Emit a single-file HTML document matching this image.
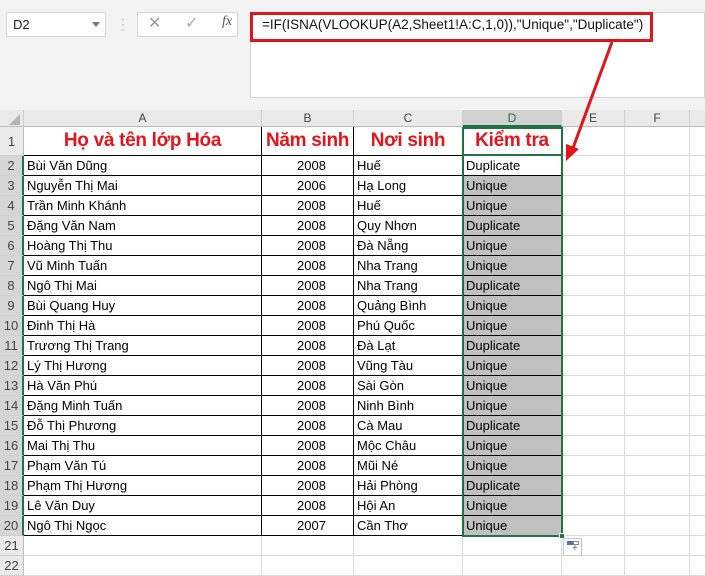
<!DOCTYPE html>
<html><head><meta charset="utf-8"><style>
*{margin:0;padding:0;box-sizing:border-box}
body{width:705px;height:565px;overflow:hidden;background:#fff;font-family:"Liberation Sans","DejaVu Sans",sans-serif;position:relative}
.a{position:absolute}
.top{left:0;top:0;width:705px;height:110px;background:#f3f3f3}
.colh{top:110px;height:17px;background:#eaeaea;border-right:1px solid #d0d0d0;border-bottom:1px solid #bdbdbd;font-size:12px;color:#444;text-align:center;line-height:17px}
.rowh{left:0;width:24px;background:#eaeaea;border-bottom:1px solid #d0d0d0;border-right:1px solid #bdbdbd;font-size:13px;color:#444;text-align:center}
.c{font-size:13px;color:#000;white-space:nowrap;overflow:hidden;border-bottom:1px solid #000;border-right:1px solid #000;padding-left:3px;line-height:19px}
.g{border-bottom:1px solid #dadada;border-right:1px solid #dadada}
.h{font-size:19px;font-weight:bold;color:#e3151b;text-align:center;line-height:28px;border-bottom:1px solid #000;border-right:1px solid #000;white-space:nowrap;letter-spacing:-0.3px}
</style></head><body>
<div class="a top"></div>
<div class="a" style="left:6px;top:12px;width:100px;height:25px;background:#fff;border:1px solid #d4d4d4;font-size:13px;line-height:23px;padding-left:6px;color:#222">D2</div>
<div class="a" style="left:92px;top:22px;border-left:4px solid transparent;border-right:4px solid transparent;border-top:5px solid #777"></div>
<div class="a" style="left:121px;top:17px;color:#aaa;font-size:12px;line-height:5px">·<br>·<br>·</div>
<div class="a" style="left:137px;top:12px;width:101px;height:25px;background:#fff;border:1px solid #d4d4d4"></div>
<div class="a" style="left:148px;top:13px;color:#999;font-size:16px">✕</div>
<div class="a" style="left:185px;top:13px;color:#aaa;font-size:16px">✓</div>
<div class="a" style="left:222px;top:14px;color:#555;font-size:14px;font-style:italic;font-family:'Liberation Serif',serif">fx</div>
<div class="a" style="left:250px;top:12px;width:455px;height:86px;background:#fff;border:1px solid #d4d4d4"></div>
<div class="a" style="left:250px;top:12px;width:403px;height:30px;border:3px solid #e0141b"></div>
<div class="a" style="left:262px;top:17px;font-size:13.5px;color:#111;white-space:nowrap">=IF(ISNA(VLOOKUP(A2,Sheet1!A:C,1,0)),"Unique","Duplicate")</div>

<div class="a colh" style="left:0;width:24px"><svg width="24" height="17"><path d="M20 4 L20 15 L9 15 Z" fill="#b5b5b5"/></svg></div>
<div class="a colh" style="left:24px;width:238px">A</div>
<div class="a colh" style="left:262px;width:92px">B</div>
<div class="a colh" style="left:354px;width:109px">C</div>
<div class="a colh" style="left:463px;width:99px;background:#d2d2d2;color:#217346;border-bottom:2px solid #217346">D</div>
<div class="a colh" style="left:562px;width:63px">E</div>
<div class="a colh" style="left:625px;width:65px">F</div>
<div class="a colh" style="left:690px;width:20px"></div>

<div id="g"></div>
<script>
var names=["Bùi Văn Dũng","Nguyễn Thị Mai","Trần Minh Khánh","Đặng Văn Nam","Hoàng Thị Thu","Vũ Minh Tuấn","Ngô Thị Mai","Bùi Quang Huy","Đinh Thị Hà","Trương Thị Trang","Lý Thị Hương","Hà Văn Phú","Đặng Minh Tuấn","Đỗ Thị Phương","Mai Thị Thu","Phạm Văn Tú","Phạm Thị Hương","Lê Văn Duy","Ngô Thị Ngọc"];
var yrs=["2008","2006","2008","2008","2008","2008","2008","2008","2008","2008","2008","2008","2008","2008","2008","2008","2008","2008","2007"];
var pl=["Huế","Hạ Long","Huế","Quy Nhơn","Đà Nẵng","Nha Trang","Nha Trang","Quảng Bình","Phú Quốc","Đà Lạt","Vũng Tàu","Sài Gòn","Ninh Bình","Cà Mau","Mộc Châu","Mũi Né","Hải Phòng","Hội An","Cần Thơ"];
var ck=["Duplicate","Unique","Unique","Duplicate","Unique","Unique","Duplicate","Unique","Unique","Duplicate","Unique","Unique","Unique","Duplicate","Unique","Unique","Duplicate","Unique","Unique"];
var h='';
function d(s,st,t){h+='<div class="a '+s+'" style="'+st+'">'+(t||'')+'</div>';}
d('rowh','top:127px;height:29px;line-height:29px','1');
d('h','left:24px;top:127px;width:238px;height:29px','Họ và tên lớp Hóa');
d('h','left:262px;top:127px;width:92px;height:29px','Năm sinh');
d('h','left:354px;top:127px;width:109px;height:29px','Nơi sinh');
d('h','left:463px;top:127px;width:99px;height:29px','Kiểm tra');
d('g','left:562px;top:127px;width:63px;height:29px');d('g','left:625px;top:127px;width:65px;height:29px');d('g','left:690px;top:127px;width:20px;height:29px');
for(var i=0;i<21;i++){var y=156+i*20,n=i+2;
 var sel=i<19;
 d('rowh','top:'+y+'px;height:20px;line-height:20px;'+(sel?'background:#d6d6d6;border-right:2px solid #217346;':''),n);
 if(i<19){
  d('c','left:24px;top:'+y+'px;width:238px;height:20px',names[i]);
  d('c','left:262px;top:'+y+'px;width:92px;height:20px;text-align:center;padding-left:8px',yrs[i]);
  d('c','left:354px;top:'+y+'px;width:109px;height:20px',pl[i]);
  d('c','left:463px;top:'+y+'px;width:99px;height:20px;'+(i>0?'background:#c0c0c0;':''),ck[i]);
 } else {
  d('g','left:24px;top:'+y+'px;width:238px;height:20px');d('g','left:262px;top:'+y+'px;width:92px;height:20px');
  d('g','left:354px;top:'+y+'px;width:109px;height:20px');d('g','left:463px;top:'+y+'px;width:99px;height:20px');
 }
 d('g','left:562px;top:'+y+'px;width:63px;height:20px');d('g','left:625px;top:'+y+'px;width:65px;height:20px');d('g','left:690px;top:'+y+'px;width:20px;height:20px');
}
document.getElementById('g').innerHTML=h;
</script>
<div class="a" style="left:462px;top:127px;width:101px;height:410px;border:2px solid #217346"></div>
<div class="a" style="left:462px;top:154px;width:101px;height:2px;background:#217346"></div>
<div class="a" style="left:559px;top:533px;width:6px;height:6px;background:#217346;border:1px solid #fff"></div>
<div class="a" style="left:563px;top:538px;width:19px;height:18px;background:#fff;border:1px solid #c8c8c8"></div>
<div class="a" style="left:567px;top:541px;width:6px;height:4px;background:#4a74c8"></div>
<div class="a" style="left:573px;top:541px;width:6px;height:4px;border:1px solid #888"></div>
<div class="a" style="left:572px;top:544px;font-size:10px;color:#666;line-height:10px">+</div>
<svg class="a" style="left:0;top:0" width="705" height="565"><line x1="612" y1="42" x2="573" y2="148" stroke="#e0141b" stroke-width="3"/><path d="M566 161 L566 144 L579 149 Z" fill="#e0141b"/></svg>
</body></html>
